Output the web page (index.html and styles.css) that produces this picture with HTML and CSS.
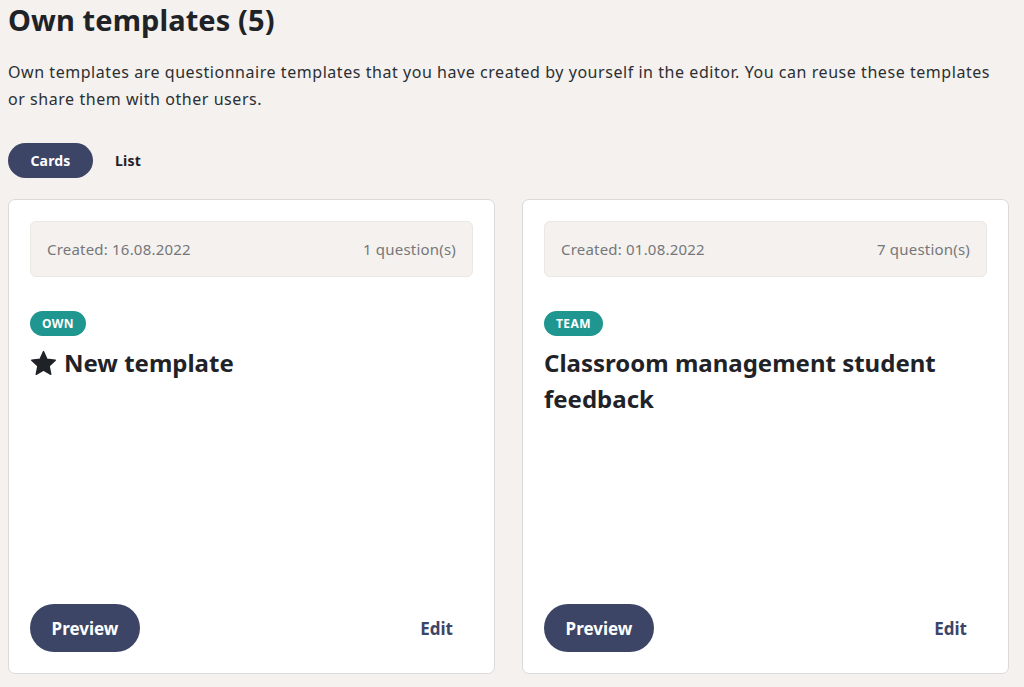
FILE: index.html
```html
<!DOCTYPE html>
<html>
<head>
<meta charset="utf-8">
<link rel="stylesheet" href="styles.css">
</head>
<body>
<main class="page">
  <h1 class="title">Own templates (5)</h1>
  <p class="intro">Own templates are questionnaire templates that you have created by yourself in the editor. You can reuse these templates or share them with other users.</p>
  <div class="tabs">
    <button class="tab tab-active">Cards</button>
    <button class="tab">List</button>
  </div>
  <div class="grid">
    <article class="card">
      <div class="meta">
        <span>Created: 16.08.2022</span>
        <span>1 question(s)</span>
      </div>
      <span class="badge">OWN</span>
      <h2 class="card-title"><svg class="star" viewBox="0 0 24 24" width="27" height="27"><path d="M12 1.4l3.1 6.8 7.4.9-5.5 5.1 1.5 7.4L12 17.9l-6.5 3.7L7 14.2 1.5 9.1l7.4-.9z" fill="#1f2328" stroke="#1f2328" stroke-width="1.2" stroke-linejoin="round"/></svg>New template</h2>
      <div class="actions">
        <button class="btn-primary">Preview</button>
        <button class="btn-link">Edit</button>
      </div>
    </article>
    <article class="card">
      <div class="meta">
        <span>Created: 01.08.2022</span>
        <span>7 question(s)</span>
      </div>
      <span class="badge">TEAM</span>
      <h2 class="card-title">Classroom management student feedback</h2>
      <div class="actions">
        <button class="btn-primary">Preview</button>
        <button class="btn-link">Edit</button>
      </div>
    </article>
  </div>
</main>
</body>
</html>
```
FILE: styles.css
```css
* { box-sizing: border-box; }
html, body { margin: 0; padding: 0; }
body {
  background: #f4f1ee;
  font-family: "Noto Sans", "Liberation Sans", sans-serif;
  color: #1f2328;
}
.page {
  padding: 0 16px 0 8px;
}
.title {
  margin: 0;
  padding-top: 1px;
  font-size: 29px;
  line-height: 38px;
  font-weight: 700;
  letter-spacing: 0.1px;
  color: #1f2328;
}
.intro {
  margin: 20px 0 0;
  font-size: 16px;
  line-height: 27px;
  letter-spacing: 0.55px;
  color: #2b2f33;
  max-width: 992px;
}
.tabs {
  display: flex;
  align-items: center;
  margin-top: 30px;
}
.tab {
  font-family: inherit;
  font-size: 14px;
  font-weight: 700;
  letter-spacing: 0.2px;
  border: none;
  background: none;
  color: #1f2328;
  height: 35px;
  padding: 0 22px;
  border-radius: 18px;
  cursor: pointer;
}
.tab-active {
  background: #3c4566;
  color: #fff;
  width: 85px;
  padding: 0;
}
.grid {
  display: grid;
  grid-template-columns: 487px 487px;
  gap: 27px;
  margin-top: 21px;
}
.card {
  background: #fff;
  border: 1px solid #dcdad8;
  border-radius: 7px;
  min-height: 475px;
  padding: 21px 21px 21px;
  display: flex;
  flex-direction: column;
  align-items: flex-start;
}
.meta {
  width: 100%;
  height: 56px;
  background: #f4f1ee;
  border: 1px solid #ebe7e3;
  border-radius: 6px;
  display: flex;
  align-items: center;
  justify-content: space-between;
  padding: 0 16px;
  font-size: 15px;
  letter-spacing: 0.2px;
  color: #76777a;
}
.badge {
  margin-top: 34px;
  background: #1f9690;
  color: #fff;
  font-size: 12px;
  font-weight: 700;
  line-height: 25px;
  height: 25px;
  padding: 0 12px;
  border-radius: 13px;
  letter-spacing: 0.4px;
}
.card-title {
  margin: 9px 0 0;
  font-size: 24px;
  line-height: 36px;
  font-weight: 700;
  color: #1f2328;
  display: flex;
  align-items: center;
  max-width: 410px;
}
.star {
  margin-right: 7px;
  flex: none;
}
.actions {
  margin-top: auto;
  width: 100%;
  display: flex;
  align-items: center;
  justify-content: space-between;
}
.btn-primary {
  font-family: inherit;
  font-size: 17px;
  font-weight: 700;
  color: #fff;
  background: #3c4566;
  border: none;
  height: 48px;
  width: 110px;
  border-radius: 24px;
  cursor: pointer;
}
.btn-link {
  font-family: inherit;
  font-size: 17px;
  font-weight: 700;
  color: #3c4566;
  background: none;
  border: none;
  padding: 0 20px 0 0;
  cursor: pointer;
}
```
